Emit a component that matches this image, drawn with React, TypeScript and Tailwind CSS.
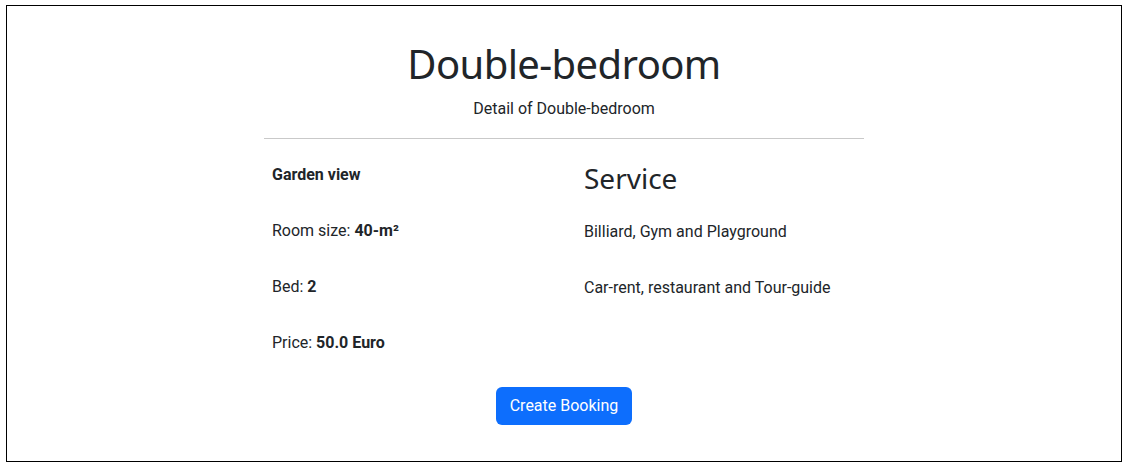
import React from 'react'

const room = {
  name: 'Double-bedroom',
  view: 'Garden view',
  size: '40-m²',
  bed: 2,
  price: '50.0 Euro',
  services: ['Billiard, Gym and Playground', 'Car-rent, restaurant and Tour-guide'],
}

export default function App() {
  return (
    <div className="bg-white min-h-[473px] pt-[5px] pl-[6px] text-[#212529]" style={{ fontFamily: 'Roboto, "Liberation Sans", sans-serif' }}>
      <div className="w-[1116px] h-[457px] border border-black">
        <div className="w-[600px] mx-auto pt-[34px] text-center">
          <h1 className="text-[40px] leading-[48px] font-normal tracking-[-0.6px]" style={{ fontFamily: '"Noto Sans", "Open Sans", sans-serif' }}>
            {room.name}
          </h1>
          <p className="mt-[9px] text-base leading-6">Detail of {room.name}</p>
          <hr className="mt-[17px] border-0 border-t border-[#c9c9c9]" />
        </div>

        <div className="w-[600px] mx-auto mt-[24px] grid grid-cols-2 text-base leading-6">
          <div className="pl-2 flex flex-col gap-8">
            <p className="font-bold">{room.view}</p>
            <p>Room size: <b>{room.size}</b></p>
            <p>Bed: <b>{room.bed}</b></p>
            <p>Price: <b>{room.price}</b></p>
          </div>
          <div className="pl-5">
            <h3 className="text-[28px] leading-[34px] font-normal -mt-[2px]" style={{ fontFamily: '"Noto Sans", "Open Sans", sans-serif' }}>Service</h3>
            <div className="mt-[25px] flex flex-col gap-8">
              {room.services.map(s => (
                <p key={s}>{s}</p>
              ))}
            </div>
          </div>
        </div>

        <div className="mt-[32px] flex justify-center">
          <button className="bg-[#0d6efd] text-white text-base leading-6 px-[13.5px] py-[7px] rounded-md">
            Create Booking
          </button>
        </div>
      </div>
    </div>
  )
}
